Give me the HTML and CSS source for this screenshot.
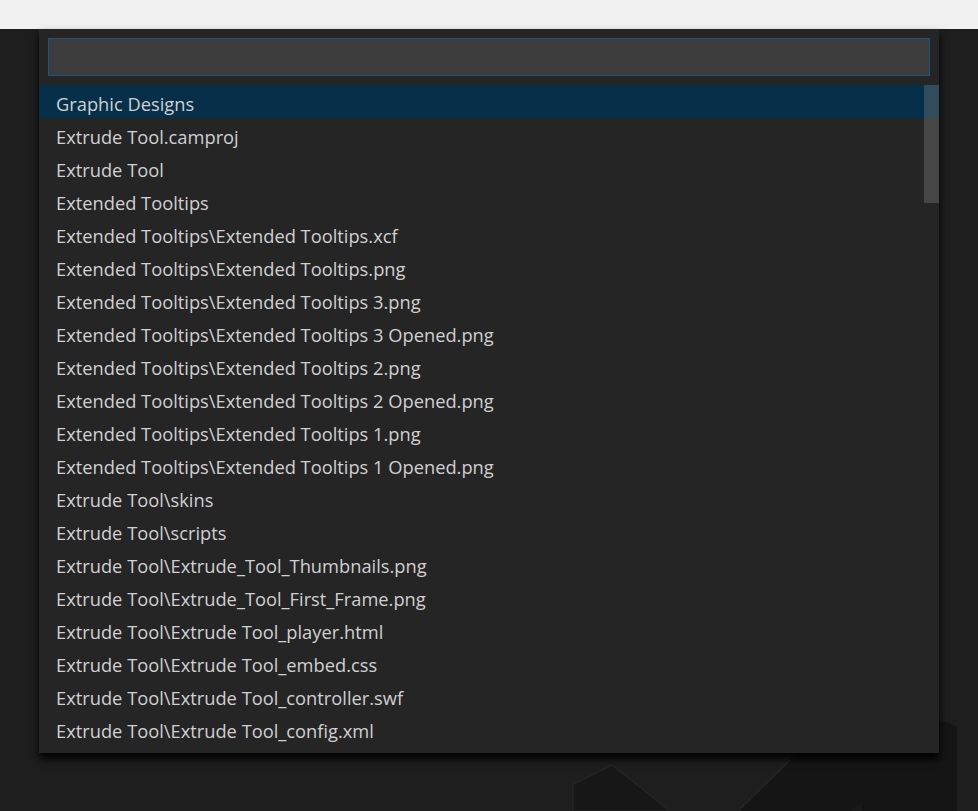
FILE: index.html
```html
<!DOCTYPE html>
<html>
<head>
<meta charset="utf-8">
<link rel="stylesheet" href="styles.css">
</head>
<body>
<div class="titlebar"></div>
<div class="workbench">
  <svg class="watermark" width="978" height="782" viewBox="0 29 978 782">
    <polygon points="738,811 830,719 938,719 958,727 958,811" fill="#151515"/>
    <polygon points="850,811 862,802 862,811" fill="#1a1a1a"/>
    <line x1="738" y1="811" x2="790" y2="760" stroke="#262626" stroke-width="1.5"/>
    <line x1="958" y1="727" x2="958" y2="811" stroke="#222" stroke-width="1"/>
    <polygon points="573,811 573,784 612,765 670,811" fill="#171717" stroke="#242424" stroke-width="1.5"/>
  </svg>
  <div class="quick-open">
    <div class="input-box"></div>
    <div class="list">
      <div class="row selected">Graphic Designs</div>
      <div class="row">Extrude Tool.camproj</div>
      <div class="row">Extrude Tool</div>
      <div class="row">Extended Tooltips</div>
      <div class="row">Extended Tooltips\Extended Tooltips.xcf</div>
      <div class="row">Extended Tooltips\Extended Tooltips.png</div>
      <div class="row">Extended Tooltips\Extended Tooltips 3.png</div>
      <div class="row">Extended Tooltips\Extended Tooltips 3 Opened.png</div>
      <div class="row">Extended Tooltips\Extended Tooltips 2.png</div>
      <div class="row">Extended Tooltips\Extended Tooltips 2 Opened.png</div>
      <div class="row">Extended Tooltips\Extended Tooltips 1.png</div>
      <div class="row">Extended Tooltips\Extended Tooltips 1 Opened.png</div>
      <div class="row">Extrude Tool\skins</div>
      <div class="row">Extrude Tool\scripts</div>
      <div class="row">Extrude Tool\Extrude_Tool_Thumbnails.png</div>
      <div class="row">Extrude Tool\Extrude_Tool_First_Frame.png</div>
      <div class="row">Extrude Tool\Extrude Tool_player.html</div>
      <div class="row">Extrude Tool\Extrude Tool_embed.css</div>
      <div class="row">Extrude Tool\Extrude Tool_controller.swf</div>
      <div class="row">Extrude Tool\Extrude Tool_config.xml</div>
      <div class="scroll-thumb"></div>
    </div>
  </div>
</div>
</body>
</html>
```
FILE: styles.css
```css
html, body {
  margin: 0;
  padding: 0;
  width: 978px;
  height: 811px;
  overflow: hidden;
  background: #1e1e1e;
}
.titlebar {
  height: 29px;
  background: #f0f0f0;
}
.workbench {
  position: relative;
  height: 782px;
  background: #1e1e1e;
}
.watermark {
  position: absolute;
  left: 0;
  top: 0;
}
.quick-open {
  position: relative;
  z-index: 1;
  margin-left: 39px;
  width: 900px;
  box-sizing: border-box;
  padding: 9px 0 8px;
  background: #252526;
  box-shadow: 0 6px 8px rgba(0, 0, 0, 0.95);
  display: flex;
  flex-direction: column;
  gap: 9px;
}
.input-box {
  margin: 0 9px;
  height: 38px;
  box-sizing: border-box;
  background: #3c3c3c;
  border: 1px solid #1a5580;
}
.list {
  position: relative;
  display: flex;
  flex-direction: column;
}
.row {
  height: 33px;
  box-sizing: border-box;
  padding-top: 4px;
  line-height: 29px;
  padding-left: 17px;
  font-family: "Open Sans", "Noto Sans", sans-serif;
  font-size: 18.3px;
  color: #d0d0d0;
  white-space: nowrap;
}
.row.selected {
  background: #062f4a;
}
.scroll-thumb {
  position: absolute;
  right: 0;
  top: 0;
  width: 15px;
  height: 118px;
  background: rgba(121, 121, 121, 0.4);
}
```
